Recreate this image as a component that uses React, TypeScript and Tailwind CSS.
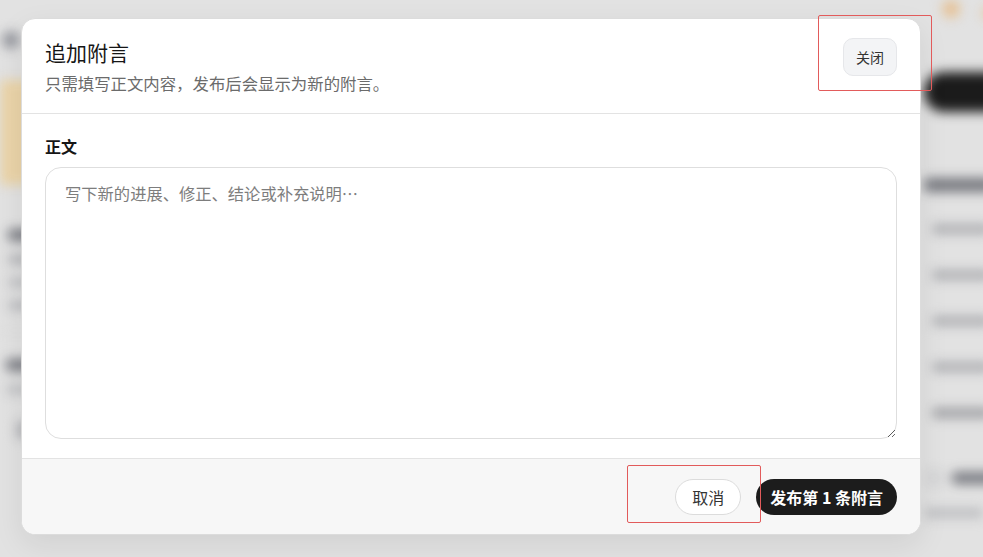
import React from 'react';

const font = { fontFamily: '"Noto Sans CJK SC", "Noto Sans", sans-serif' };

const BlurredPage: React.FC = () => (
  <div className="flex h-full w-full blur-[6px]">
    {/* Main column */}
    <div className="flex w-[918px] shrink-0 flex-col">
      <div className="flex h-[80px] items-center pl-[2px]">
        <div className="h-[18px] w-[18px] rounded-full bg-[#9a9ca3]" />
      </div>
      <div className="h-[105px] w-full bg-gradient-to-r from-[#f4dcae] via-[#f3e6cc] to-[#ececec]" />
      <div className="flex flex-col gap-[14px] pl-[8px] pt-[44px]">
        <div className="h-[12px] w-[40px] rounded bg-[#7b7d84]" />
        <div className="h-[9px] w-[30px] rounded bg-[#b5b6ba]" />
        <div className="h-[9px] w-[30px] rounded bg-[#c2c3c6]" />
        <div className="h-[9px] w-[30px] rounded bg-[#bdbec2]" />
      </div>
      <div className="mt-[20px] h-px w-full bg-[#d8d8d8]" />
      <div className="flex flex-col gap-[14px] pl-[6px] pt-[28px]">
        <div className="h-[12px] w-[40px] rounded bg-[#7b7d84]" />
        <div className="h-[9px] w-[30px] rounded bg-[#c4c5c8]" />
      </div>
      <div className="mt-[26px] ml-[16px] h-[20px] w-[14px] rounded-full bg-[#b9babe]" />
      <div className="mt-[26px] flex gap-[40px] pl-[42px]">
        <div className="h-[14px] w-[40px] rounded-full bg-[#f2c9c9]" />
        <div className="h-[14px] w-[50px] rounded-full bg-[#f2c9c9]" />
      </div>
    </div>
    {/* Sidebar */}
    <div className="flex flex-1 flex-col pl-[6px]">
      <div className="flex h-[30px] gap-[22px] pl-[18px]">
        <div className="h-[18px] w-[18px] rounded-full bg-[#f0c99a]" />
        <div className="mt-[6px] h-[14px] w-[14px] rounded-full bg-[#f0d2ad]" />
      </div>
      <div className="mt-[42px] h-[40px] w-[80px] rounded-l-full bg-[#1d1d1d]" />
      <div className="mt-[66px] h-[14px] w-[70px] rounded bg-[#7a7c83]" />
      <div className="flex flex-col gap-[36px] pl-[8px] pt-[32px]">
        <div className="h-[10px] w-[60px] rounded bg-[#b4b5b9]" />
        <div className="h-[10px] w-[60px] rounded bg-[#b4b5b9]" />
        <div className="h-[10px] w-[60px] rounded bg-[#b4b5b9]" />
        <div className="h-[10px] w-[60px] rounded bg-[#b4b5b9]" />
        <div className="h-[10px] w-[60px] rounded bg-[#a3a4a8]" />
      </div>
      <div className="mt-[52px] flex items-center gap-[10px] pl-[2px]">
        <div className="h-[16px] w-[16px] rounded-full border-2 border-[#b9babe]" />
        <div className="h-[12px] w-[50px] rounded bg-[#7b7d84]" />
      </div>
      <div className="mt-[22px] h-[10px] w-[60px] rounded bg-[#c4c5c8]" />
    </div>
  </div>
);

const App: React.FC = () => {
  return (
    <div
      className="relative h-[557px] w-full overflow-hidden bg-[#ececec]"
      style={font}
    >
      <BlurredPage />

      {/* Backdrop + Modal */}
      <div className="absolute inset-0 bg-black/[0.04] pl-[21px] pt-[18px]">
        <div className="flex h-[517px] w-[900px] flex-col overflow-hidden rounded-[14px] border border-[#dcdcdc] bg-white shadow-[0_10px_30px_rgba(0,0,0,0.08)]">
          {/* Header */}
          <div className="flex items-start justify-between border-b border-[#e3e3e3] px-[23px] pb-[20px] pt-[19px]">
            <div>
              <h2 className="text-[21px] leading-[28px] text-[#161616]">
                追加附言
              </h2>
              <p className="mt-[7px] text-[16.4px] leading-[20px] text-[#6b6b6b]">
                只需填写正文内容，发布后会显示为新的附言。
              </p>
            </div>
            <button className="h-[38px] rounded-[10px] border border-[#e6e7ea] bg-[#f3f4f6] px-[12px] text-[14px] text-[#333]">
              关闭
            </button>
          </div>

          {/* Body */}
          <div className="flex flex-1 flex-col px-[23px] pb-[19px] pt-[21px]">
            <label className="text-[16px] font-semibold leading-[22px] text-[#161616]">
              正文
            </label>
            <textarea
              className="mt-[10px] w-full flex-1 resize-y rounded-[16px] border border-[#dedede] bg-white px-[19px] py-[13px] text-[16.3px] leading-[24px] text-[#222] outline-none placeholder:text-[#7d7d7d]"
              style={font}
              placeholder="写下新的进展、修正、结论或补充说明…"
            />
          </div>

          {/* Footer */}
          <div className="flex h-[76px] items-center justify-end gap-[15px] border-t border-[#e3e3e3] bg-[#f7f7f7] px-[23px]">
            <button className="h-[36px] rounded-full border border-[#dcdcdc] bg-white px-[16px] text-[16px] text-[#333]">
              取消
            </button>
            <button className="h-[36px] rounded-full bg-[#1c1c1c] px-[14px] text-[16px] font-bold text-white">
              发布第 1 条附言
            </button>
          </div>
        </div>
      </div>

      {/* Annotation boxes */}
      <div className="absolute left-[818px] top-[15px] h-[76px] w-[114px] rounded-[2px] border-[1.5px] border-[#e25b5b]" />
      <div className="absolute left-[627px] top-[465px] h-[58px] w-[134px] rounded-[2px] border-[1.5px] border-[#e25b5b]" />
    </div>
  );
};

export default App;
